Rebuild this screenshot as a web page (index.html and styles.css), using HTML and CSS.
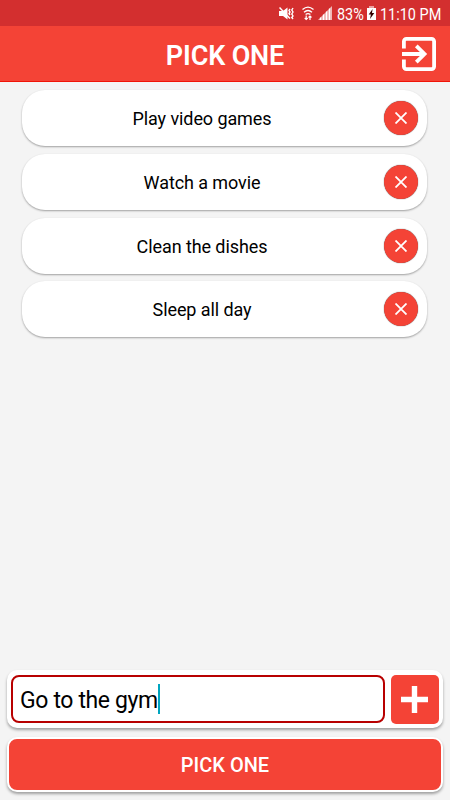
FILE: index.html
```html
<!DOCTYPE html>
<html lang="en">
<head>
  <meta charset="UTF-8">
  <meta name="viewport" content="width=device-width, initial-scale=1.0">
  <title>Pick One</title>
  <link rel="stylesheet" href="styles.css">
</head>
<body>
  <div class="status-bar">
    <svg class="mute" width="16" height="14" viewBox="0 0 16 14">
      <path d="M0 5h4l4.500-3.500v12L4 10H0z" fill="#fff"/>
      <path d="M.5 1.500l10.500 11" stroke="#fff" stroke-width="1.500"/>
      <path d="M11 3l-1 1.500L11 6l-1 1.500L11 9M14 2l-1.200 2L14 6l-1.200 2L14 10l-1.200 1.500L14 13" fill="none" stroke="#fff" stroke-width="1.400"/>
    </svg>
    <svg class="wifi" width="12" height="15" viewBox="0 0 12 15">
      <path d="M.5 3.500Q6-1.200 11.500 3.500M2 6.200Q6 2.700 10 6.200M3.600 8.600Q6 6.600 8.400 8.600" fill="none" stroke="#fff" stroke-width="1.300"/>
      <path d="M4.200 9.500v4M2.700 12l1.500 1.500L5.700 12M8 14v-4M6.500 11.500L8 10l1.500 1.500" fill="none" stroke="#fff" stroke-width="1.200"/>
    </svg>
    <svg class="signal" width="14" height="14" viewBox="0 0 14 14">
      <path d="M14 0v14H0z" fill="#fff" fill-opacity=".65"/>
      <path d="M2.500 11.500V14M5.500 8.500V14M8.500 5.500V14M11.500 2.500V14" stroke="#fff" stroke-width="1.200"/>
    </svg>
    <span class="percent">83%</span>
    <svg class="battery" width="9" height="14" viewBox="0 0 9 14">
      <path d="M2 0h5v2H2z" fill="#fff" fill-opacity=".55"/>
      <path d="M0 2h9v12H0z" fill="#fff"/>
      <path d="M5.600 3L1.700 8.500h2.200L3 13l4.300-6H5z" fill="#300"/>
    </svg>
    <span class="time">11:10 PM</span>
  </div>

  <header class="app-bar">
    <h1>PICK ONE</h1>
    <button class="exit-button" aria-label="Exit">
      <svg width="34" height="34" viewBox="0 0 34 34" fill="none" stroke="#fff" stroke-width="3.800">
        <path d="M1.900 11.500V4.400a2.500 2.500 0 0 1 2.500-2.500h25.200a2.500 2.500 0 0 1 2.500 2.500v25.200a2.500 2.500 0 0 1-2.500 2.500H4.400a2.500 2.500 0 0 1-2.500-2.500v-7.100"/>
        <path d="M0 17h22.500M14.300 8.800l8.200 8.200-8.200 8.200"/>
      </svg>
    </button>
  </header>

  <ul class="choices">
    <li class="choice">
      <span class="choice-name">Play video games</span>
      <button class="remove-button" aria-label="Remove">
        <svg width="12" height="12" viewBox="0 0 12 12"><path d="M.5.5l11 11M11.500.5l-11 11"/></svg>
      </button>
    </li>
    <li class="choice">
      <span class="choice-name">Watch a movie</span>
      <button class="remove-button" aria-label="Remove">
        <svg width="12" height="12" viewBox="0 0 12 12"><path d="M.5.5l11 11M11.500.5l-11 11"/></svg>
      </button>
    </li>
    <li class="choice">
      <span class="choice-name">Clean the dishes</span>
      <button class="remove-button" aria-label="Remove">
        <svg width="12" height="12" viewBox="0 0 12 12"><path d="M.5.5l11 11M11.500.5l-11 11"/></svg>
      </button>
    </li>
    <li class="choice">
      <span class="choice-name">Sleep all day</span>
      <button class="remove-button" aria-label="Remove">
        <svg width="12" height="12" viewBox="0 0 12 12"><path d="M.5.5l11 11M11.500.5l-11 11"/></svg>
      </button>
    </li>
  </ul>

  <div class="add-row">
    <div class="text-field"><span>Go to the gym</span><i class="caret"></i></div>
    <button class="add-button" aria-label="Add">
      <svg width="27" height="27" viewBox="0 0 27 27"><path d="M13.500 0v27M0 13.500h27" stroke="#fff" stroke-width="5.400"/></svg>
    </button>
  </div>
  <button class="pick-button">PICK ONE</button>
</body>
</html>
```

FILE: styles.css
```css
* {
  box-sizing: border-box;
}

body {
  display: flex;
  flex-direction: column;
  height: 800px;
  margin: 0;
  font-family: Roboto, sans-serif;
  background-color: #f4f4f4;
  color: #000;
}

button {
  display: flex;
  align-items: center;
  justify-content: center;
  padding: 0;
  border: none;
  font-family: inherit;
}

.status-bar {
  display: flex;
  align-items: center;
  justify-content: flex-end;
  height: 26px;
  padding: 0 8px 0 0;
  background-color: #d32f2f;
  color: #fff;
  font-size: 17px;
  line-height: 26px;
}

.mute {
  margin-right: 7px;
}

.wifi {
  margin-right: 4px;
}

.signal {
  margin-right: 5px;
}

.percent,
.time {
  padding-top: 1px;
  white-space: nowrap;
  transform: scaleX(0.85);
  transform-origin: left;
}

.percent {
  width: 26px;
  margin-right: 4px;
}

.battery {
  margin-right: 4px;
}

.time {
  width: 62px;
}

.app-bar {
  display: grid;
  grid-template-columns: 50px 1fr 50px;
  align-items: center;
  height: 56px;
  background-color: #f44336;
  border-bottom: 1px solid #f01408;
}

h1 {
  grid-column: 2;
  margin: 4px 0 0;
  color: #fff;
  font-size: 27px;
  font-weight: 600;
  letter-spacing: -0.15px;
  text-align: center;
}

.exit-button {
  width: 34px;
  height: 34px;
  margin-left: 2px;
  background: none;
}

.choices {
  display: flex;
  flex: 1;
  flex-direction: column;
  gap: 7.800px;
  margin: 0;
  padding: 8px 23px 0 22px;
  list-style: none;
}

.choice {
  display: flex;
  align-items: center;
  height: 56px;
  padding-right: 9px;
  background-color: #fff;
  border-radius: 23px;
  box-shadow: 0 1px 2px rgba(0, 0, 0, 0.35);
}

.choice-name {
  flex: 1;
  padding: 1px 2px 0 0;
  font-size: 18px;
  letter-spacing: -0.09px;
  text-align: center;
}

.remove-button {
  width: 34px;
  height: 34px;
  background-color: #f44336;
  border-radius: 50%;
  box-shadow: 0 0 1px rgba(0, 0, 0, 0.8);
}

.remove-button path {
  stroke: #fff;
  stroke-width: 1.800;
}

.add-row {
  display: flex;
  gap: 6px;
  height: 58px;
  margin: 0 7px 9px;
  padding: 5px 4px 4px;
  background-color: #fff;
  border-radius: 10px;
  box-shadow: 0 2px 3px rgba(0, 0, 0, 0.35);
}

.text-field {
  display: flex;
  flex: 1;
  align-items: center;
  height: 48px;
  padding-left: 7px;
  border: 2px solid #b80000;
  border-radius: 8px;
  font-size: 23px;
  letter-spacing: -0.37px;
}

.text-field span {
  padding-top: 3px;
}

.caret {
  width: 2px;
  height: 30px;
  background-color: #00a5bf;
}

.add-button {
  width: 48px;
  height: 49px;
  padding-right: 1px;
  background-color: #f44336;
  border-radius: 5px;
}

.pick-button {
  height: 55px;
  margin: 0 7px 8px;
  background-color: #f44336;
  border: 2px solid #fff;
  border-radius: 10px;
  box-shadow: 0 2px 3px rgba(0, 0, 0, 0.35);
  color: #fff;
  font-size: 20px;
  font-weight: 500;
}
```
